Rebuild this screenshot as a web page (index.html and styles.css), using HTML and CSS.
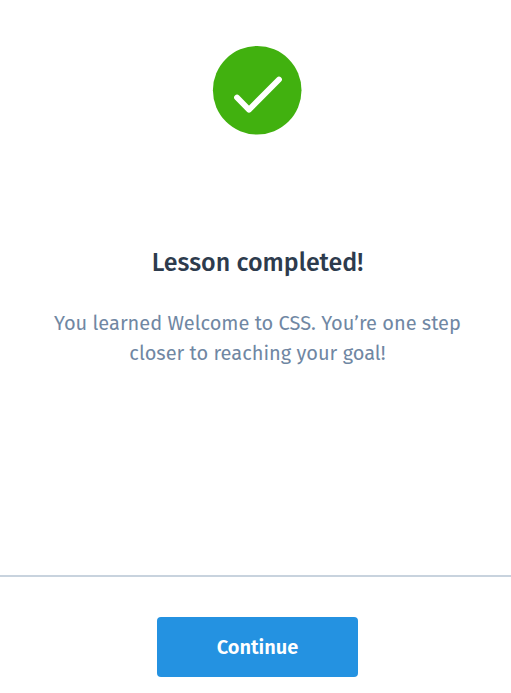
FILE: index.html
```html
<!DOCTYPE html>
<html lang="en">
<head>
<meta charset="utf-8">
<title>Lesson completed</title>
<link rel="stylesheet" href="styles.css">
</head>
<body>
<main class="content">
<svg class="check" viewBox="0 0 90 90" aria-hidden="true"><circle cx="45.2" cy="45.3" r="44.3"/><path d="M25 52.5 37 64.7 67 34.5"/></svg>
<h1 class="title">Lesson completed!</h1>
<p class="text">You learned Welcome to CSS. You’re one step<br>closer to reaching your goal!</p>
</main>
<footer class="footer"><button class="button">Continue</button></footer>
</body>
</html>
```
FILE: styles.css
```css
*{box-sizing:border-box}
body{margin:0;height:693px;display:flex;flex-direction:column;overflow:hidden;background:#fff;font-family:"Fira Sans","Noto Sans",sans-serif}
.content{height:575px;padding-top:45px;padding-left:3px;display:flex;flex-direction:column;align-items:center}
.check{width:90px;height:90px;fill:#41b10f;flex:none}
.check path{fill:none;stroke:#fff;stroke-width:5.8;stroke-linecap:round;stroke-linejoin:round}
.title{margin:110px 0 0;padding-left:1px;font-size:25px;line-height:36px;font-weight:500;color:#2d3b4d;white-space:nowrap}
.text{margin:27px 0 0;padding-left:1px;font-size:20px;line-height:30px;color:#7087a3;text-align:center;white-space:nowrap}
.footer{height:118px;border-top:2px solid #c8d3de;padding:40px 0 0 3px;display:flex;justify-content:center}
.button{width:201px;height:60px;border:0;border-radius:4px;background:#2492e1;color:#fff;font:600 20px/30px "Fira Sans","Noto Sans",sans-serif;padding:0 0 0 1px}
```
